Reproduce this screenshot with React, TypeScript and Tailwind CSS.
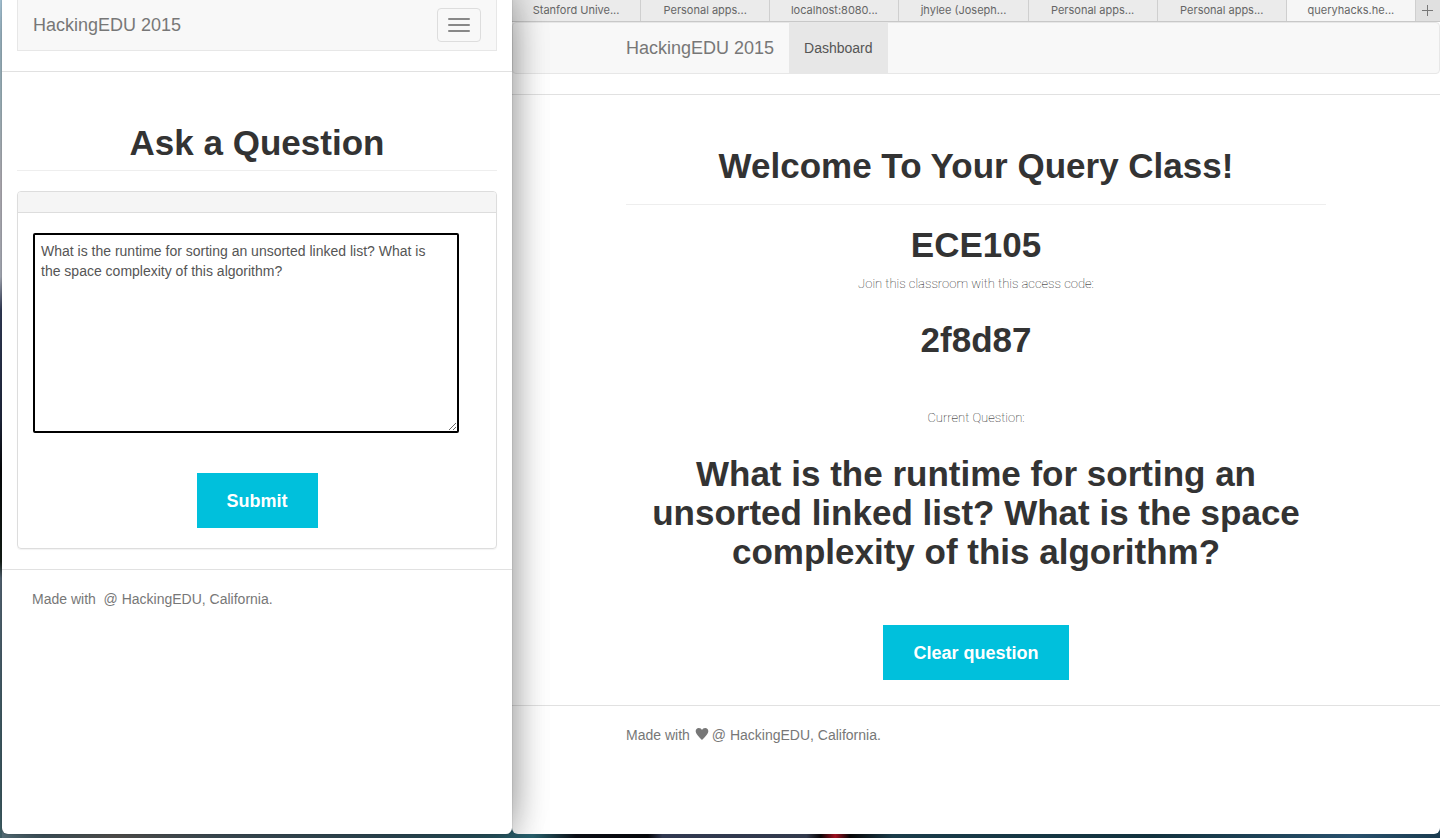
import type { ReactNode } from "react";
import { useState } from "react";

const TABS = [
  "Stanford Unive...",
  "Personal apps...",
  "localhost:8080...",
  "jhylee (Joseph...",
  "Personal apps...",
  "Personal apps...",
  "queryhacks.he...",
];

const QUESTION =
  "What is the runtime for sorting an unsorted linked list? What is the space complexity of this algorithm?";

function Heading({ children }: { children: ReactNode }) {
  return (
    <h1 className="text-center text-[35px] leading-[39px] font-bold text-[#333]">
      {children}
    </h1>
  );
}

function ThinText({ children }: { children: ReactNode }) {
  return (
    <p className="font-['Roboto',sans-serif] text-[13px] leading-5 font-thin text-black">
      {children}
    </p>
  );
}

function ActionButton({ children }: { children: ReactNode }) {
  return (
    <button
      type="button"
      className="h-[55px] bg-[#00c0dc] px-[30px] text-lg font-bold text-white"
    >
      {children}
    </button>
  );
}

function Heart() {
  return (
    <svg viewBox="0 0 14 14" className="mr-[3px] ml-[5px] inline-block size-[14px] align-[-1px]" fill="currentColor" aria-hidden="true">
      <path d="M7 13 C6.2 11.6 1 7.8 0.7 4.4 C0.5 2.2 2 0.9 3.8 0.9 C5.4 0.9 6.5 1.8 7 3 C7.5 1.8 8.6 0.9 10.2 0.9 C12 0.9 13.5 2.2 13.3 4.4 C13 7.8 7.8 11.6 7 13 Z" />
    </svg>
  );
}

function AskWindow() {
  const [text, setText] = useState(QUESTION);
  return (
    <section className="relative z-10 rounded-b-md bg-white shadow-[0_-16px_36px_rgba(0,0,0,0.27),0_16px_36px_rgba(0,0,0,0.27),0_0_1px_rgba(0,0,0,0.6)]">
      <header className="border-b border-[#e1e1e1] px-[15px] pb-5">
        <nav className="flex h-[51px] items-center justify-between border border-t-0 border-[#e7e7e7] bg-[#f8f8f8] px-[15px]">
          <a href="#home" className="text-lg leading-5 text-[#777]">
            HackingEDU 2015
          </a>
          <button
            type="button"
            aria-label="Toggle navigation"
            className="flex h-[34px] w-11 flex-col items-center justify-center gap-1 rounded border border-[#ddd]"
          >
            <span className="h-0.5 w-[22px] rounded-[1px] bg-[#888]" />
            <span className="h-0.5 w-[22px] rounded-[1px] bg-[#888]" />
            <span className="h-0.5 w-[22px] rounded-[1px] bg-[#888]" />
          </button>
        </nav>
      </header>

      <main className="border-b border-[#e1e1e1] px-[15px] pt-[51px] pb-5">
        <div className="border-b border-[#eee] pb-2">
          <Heading>Ask a Question</Heading>
        </div>
        <form className="mt-5 rounded border border-[#ddd] shadow-[0_1px_1px_rgba(0,0,0,0.05)]">
          <div className="h-[21px] rounded-t-[3px] border-b border-[#ddd] bg-[#f5f5f5]" />
          <div className="px-[15px] py-5">
            <textarea
              aria-label="Question"
              value={text}
              onChange={(e) => setText(e.target.value)}
              className="block h-[200px] w-[95%] resize rounded-[2px] border-2 border-black bg-white py-1.5 pr-5 pl-1.5 text-sm leading-5 text-[#555] outline-none"
            />
            <div className="mt-10 text-center">
              <ActionButton>Submit</ActionButton>
            </div>
          </div>
        </form>
      </main>

      <footer className="px-[30px] py-[19px] text-sm leading-5 whitespace-pre text-[#777]">
        {"Made with  @ HackingEDU, California."}
      </footer>
    </section>
  );
}

function TabStrip() {
  return (
    <div role="tablist" className="flex h-[22px] border-b border-[#c8c8c8] bg-[#e0e0e0] font-['Inter',sans-serif] text-[11px] text-[#666]">
      {TABS.map((tab, i) => (
        <button
          key={i}
          type="button"
          role="tab"
          aria-selected={i === TABS.length - 1}
          className="min-w-0 flex-1 truncate border-r border-[#cfcfcf] bg-[#ebebeb] px-2 aria-selected:bg-[#f6f6f6]"
        >
          {tab}
        </button>
      ))}
      <button type="button" aria-label="New tab" className="flex w-6 items-center justify-center">
        <svg viewBox="0 0 12 12" className="size-3" stroke="#777" fill="none" aria-hidden="true">
          <path d="M5.5 0v11M0 5.5h11" />
        </svg>
      </button>
    </div>
  );
}

function ClassWindow() {
  return (
    <section className="rounded-b-md bg-white">
      <TabStrip />
      <header className="border-b border-[#e1e1e1] pb-5">
        <nav className="rounded border border-[#e7e7e7] bg-[#f8f8f8]">
          <div className="mx-auto flex h-[50px] max-w-[700px] items-center">
            <a href="#home" className="pr-[15px] text-lg leading-5 text-[#777]">
              HackingEDU 2015
            </a>
            <a href="#dashboard" className="flex h-full items-center bg-[#e7e7e7] px-[15px] text-sm text-[#555]">
              Dashboard
            </a>
          </div>
        </nav>
      </header>

      <main className="border-b border-[#e1e1e1] pt-[51px] pb-[25px]">
        <div className="mx-auto max-w-[700px] text-center">
          <div className="border-b border-[#eee] pb-[19px]">
            <Heading>Welcome To Your Query Class!</Heading>
          </div>
          <div className="pt-5 pb-[10px]">
            <Heading>ECE105</Heading>
          </div>
          <ThinText>Join this classroom with this access code:</ThinText>
          <div className="pt-[26px] pb-[49px]">
            <Heading>2f8d87</Heading>
          </div>
          <ThinText>Current Question:</ThinText>
          <div className="pt-[26px] pb-[54px]">
            <Heading>{QUESTION}</Heading>
          </div>
          <ActionButton>Clear question</ActionButton>
        </div>
      </main>

      <footer className="mx-auto max-w-[700px] py-[19px] text-sm leading-5 text-[#777]">
        Made with
        <Heart />@ HackingEDU, California.
      </footer>
    </section>
  );
}

export default function App() {
  return (
    <div className="grid min-h-screen grid-cols-[510fr_928fr] bg-[linear-gradient(180deg,#b6d8ec_0%,#c0dae4_12%,#d8d4dc_22%,#ccd2df_33%,#3c486a_37%,#26304a_50%,#080a0c_56%,#18241c_67%,#667a8c_69%,#50707c_85%,#45686f_100%),linear-gradient(90deg,#5e7a84_0%,#4c646e_3%,#64625f_8%,#4a5c66_15%,#345462_27%,#28606c_37%,#0a0d14_40%,#05060a_45%,#303850_46%,#323a4c_56%,#0b0506_57%,#a01020_58%,#080506_59%,#1a3c4a_62%,#12323e_80%,#28506c_94%,#1a3c50_100%)] bg-[length:2px_100%,100%_100%] bg-no-repeat pb-1 pl-0.5 font-['Liberation_Sans',Arial,sans-serif]">
      <AskWindow />
      <ClassWindow />
    </div>
  );
}
